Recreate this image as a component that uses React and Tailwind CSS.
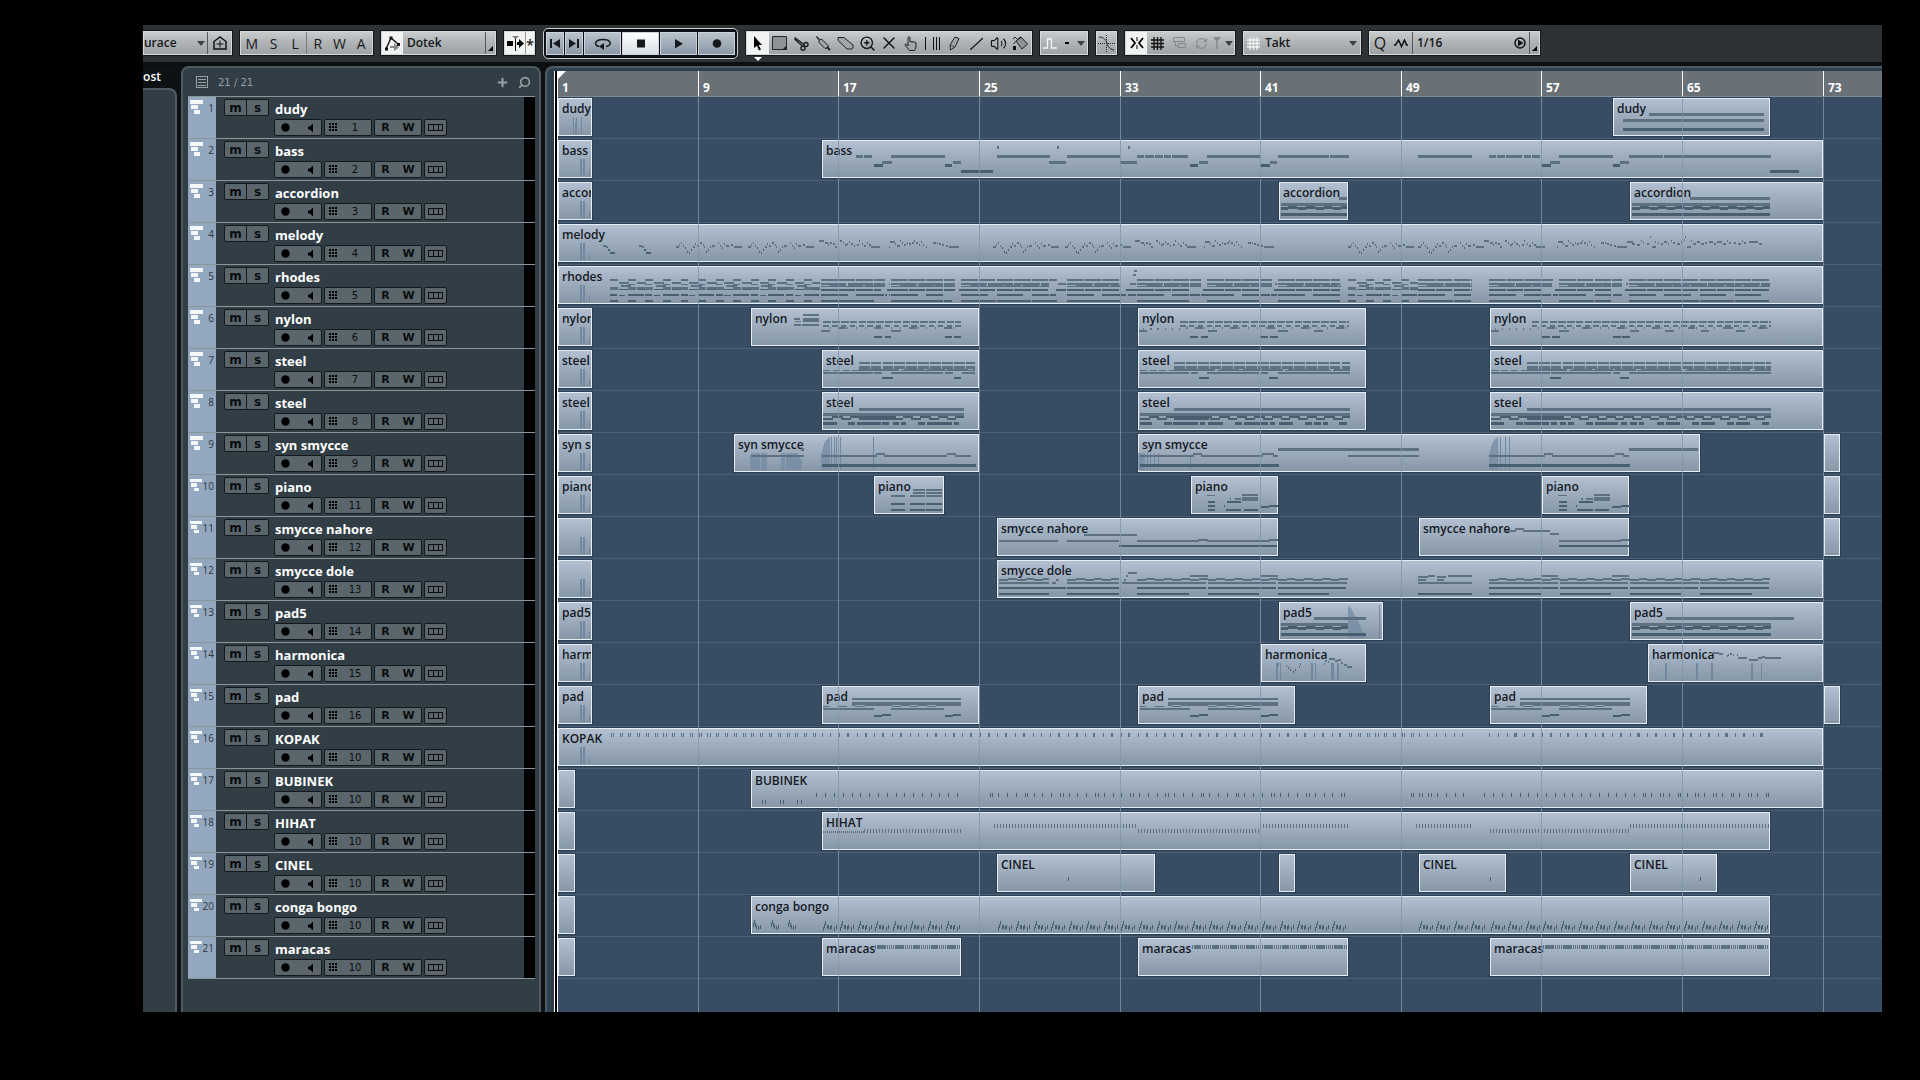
import { Plus, RefreshCw, Search, Volume2, X, ZoomIn } from "lucide-react";

// width of one bar in the arrangement
const BAR = 17.58;
const toX = (bar) => Math.round((bar - 1) * BAR);

const every = (from, to, step, len) => {
  const out = [];
  for (let b = from; b < to - 0.01; b += step) {
    out.push([b, Math.min(b + len, to)]);
  }
  return out;
};

const bars = (text, shift = 0) =>
  text.split(" ").map((part) => part.split("-").map((n) => Number(n) + shift));

// row of notes: y, height, list of [from, to] in bars
const row = (y, h, ...lists) => ({ y, h, list: lists.flat() });

// single hits, one pixel wide
const ticks = (from, to, step) => every(from, to, step, 0.02);

const start = [1, 3];

const chordBlock = (from, to) => [
  row(22, 3, [[from, to]]),
  row(25, 1, every(from + 0.45, to, 1, 0.5)),
  row(26, 2, [[from, to]]),
  row(28, 1, every(from, to, 1, 0.45)),
  row(32, 3, [[from, to]]),
];

const nylonRows = (from, solid, to) => [
  row(14, 2, every(solid, to, 0.5, 0.43)),
  row(18, 2, every(solid, to, 0.5, 0.3)),
  row(20, 2, every(solid + 0.35, to, 0.5, 0.06), every(solid + 0.9, to, 2, 0.4)),
  row(21, 2, every(from + 0.3, solid, 0.4, 0.06)),
];

const steelRows = (from, solid, to) => [
  row(13, 2, every(solid, to, 0.68, 0.62)),
  row(17, 3, every(solid, to, 0.68, 0.62)),
  row(20, 2, every(solid, to, 1.3, 1), every(solid + 0.6, to, 2.2, 0.9)),
  row(21, 1, every(from, to, 0.55, 0.4)),
];

const steelLow = (from, solid, to) => [
  row(17, 3, [[solid, to]]),
  row(22, 3, [[from, to]]),
  row(25, 2, every(from + 0.5, to, 1, 0.6), every(solid, solid + 2, 2, 2)),
  row(27, 2, every(from, to, 1, 0.55), every(solid, solid + 2, 2, 2)),
];

const padRows = (shift) => [
  row(13, 2, bars("17.7-23.95", shift)),
  row(17, 3, bars("17.7-23.95", shift)),
  row(20, 1, bars("17.7-17.9 18.45-20 20.5-21 21.5-22 22.5-23.95", shift)),
  row(21, 1, bars("16.1-16.45 16.9-17.45 17.9-18.45 20-20.5 21-21.5 22-22.5", shift)),
  row(23, 2, bars("16.1-18.95 19.96-22.95", shift)),
  row(29, 2, bars("19.45-19.96 23.45-23.95", shift)),
  row(30, 2, bars("18.95-19.45 23-23.45", shift)),
];

const pianoRows = (shift) => [
  row(20, 1, bars("37.9-38.4", shift)),
  row(19, 2, bars("39.93-40.83", shift)),
  row(22, 4, bars("39.93-40.83", shift)),
  row(23, 2, bars("39.2-39.3 39.5-39.85", shift)),
  row(26, 2, bars("37.95-38.4 39.07-39.85", shift)),
  row(30, 2, bars("37.95-38.4 38.9-38.95 41.46-41.95", shift)),
  row(31, 2, bars("40.95-41.46", shift)),
  row(34, 2, bars("37.95-38.4 38.97-39.87 40-40.8", shift)),
];

const doleRows = (from, to) => [
  row(19, 2, every(from + 0.5, to, 1, 0.5)),
  row(20, 2, every(from, to, 1, 0.5)),
  row(23, 2, every(from, to, 4, 3.92)),
  row(28, 2, every(from, to, 4, 3.9)),
  row(34, 2, every(from, to, 4, 2.92)),
];

const rhodesDense = (from, to) => [
  row(14, 2, every(from, to, 1, 0.93)),
  row(18, 2, every(from, to, 1.5, 1.44)),
  row(20, 2, every(from + 0.5, to, 1, 0.9)),
  row(21, 1, every(from, to, 1, 0.5)),
  row(24, 2, every(from, to, 1, 0.93)),
  row(29, 2, every(from, to, 2, 1.5)),
  row(35, 2, every(from, to, 2, 1.96)),
];

const rhodesLoose = (from, to) => [
  row(14, 2, every(from, to, 1, 0.45)),
  row(17, 2, every(from + 0.5, to, 1, 0.55)),
  row(19, 1, every(from + 1, to, 1, 0.4)),
  row(20, 2, every(from + 0.6, to, 2, 0.6)),
  row(22, 3, every(from, to, 1, 0.45), every(from + 1.5, to, 2, 0.5)),
  row(24, 1, every(from + 0.5, to, 1, 0.5)),
  row(29, 2, every(from, to, 1, 0.4), every(from + 1.4, to, 2, 0.5)),
  row(30, 1, every(from + 0.5, to, 1, 0.35)),
  row(35, 2, every(from, to, 1, 0.45)),
];

// melody phrases: x, y, width in px
const phraseA =
  "0,23,3 3,21,1 5,19,1 7,22,1 9,24,1 11,28,1 13,29,1 15,26,1 17,23,2 19,20,1 21,22,2 24,19,2 27,21,1 28,23,1 30,28,1 32,26,1 34,23,1 36,22,3 42,19,1 44,22,1 46,24,1 48,20,1 50,22,3 55,21,2 58,23,8";
const phraseB =
  "0,17,5 6,19,3 9,21,1 11,19,2 14,20,2 16,23,2 21,17,2 24,19,1 26,21,2 28,20,1 30,18,1 32,20,2 35,22,1 38,21,2 40,17,1 43,20,1 45,22,2 48,19,1 50,21,2 52,23,9";
const phraseC =
  "0,23,1 1,18,5 6,20,1 8,22,3 11,17,1 13,19,1 15,21,2 18,19,1 20,20,2 23,19,2 25,17,1 27,19,2 30,21,1 32,18,1 34,21,1 37,23,1 44,19,3 48,19,1 50,20,2 53,21,2 57,22,2 60,23,10";
const phraseD =
  "0,18,6 5,20,3 10,21,3 14,17,1 16,19,1 20,20,2 23,13,1 25,23,4 28,18,1 31,19,1 34,20,2 37,18,3 41,20,1 44,17,1 46,19,2 50,20,3 54,18,1 57,16,1 58,13,1 60,23,4 64,17,1 66,20,3 70,18,3 74,20,3 78,19,2 82,18,4 87,20,2 90,18,5 96,20,3 100,17,1 102,19,2 107,19,2 111,20,3 115,17,1 117,19,2 122,18,9 132,20,3";
const phraseIntro = "0,22,3 3,23,2 5,26,2 7,29,5";

const phrase = (bar, text) =>
  text.split(" ").map((n) => {
    const [x, y, w] = n.split(",").map(Number);
    return { x: toX(bar) + x, y, w };
  });

const congaHit = "0,32,1 1,29,1 2,26,1 4,30,1 5,30,1 7,31,1 8,30,1 11,32,1 13,30,1";
const conga = (from, to) =>
  every(from, to, 1, 1).flatMap(([b]) => phrase(b, congaHit).map((n) => ({ ...n, h: 4 })));

const tracks = [
  {
    name: "dudy",
    channel: 1,
    clips: [start, [61, 70]],
    rows: [
      row(16, 3, bars("63.07-69.6")),
      row(22, 3, bars("61.6-69.6")),
      row(31, 3, bars("61.6-69.6")),
    ],
    control: "M15 20V37M23 20V37M17 26V37M18 20V37",
  },
  {
    name: "bass",
    channel: 2,
    clips: [start, [16, 73]],
    rows: [
      row(7, 3, bars("25.97-26.06 29.4-29.5 33.45-33.55")),
      row(
        16,
        3,
        bars(
          "17.97-18.35 18.43-18.87 19.97-23.02 25.96-29 29.97-32.98 33.95-34.35 34.41-34.88 34.97-35.4 35.45-35.88 35.94-36.85 37.93-40.98 41.97-44.87 44.93-46 49.94-53 53.97-54.37 54.43-54.88 54.94-55.85 55.97-56.36 56.42-56.88 57.96-61.03 61.94-63.87 63.93-70"
        )
      ),
      row(
        22,
        3,
        bars("19.45-20 23.45-23.9 28.95-29.9 32.95-33.95 37.48-38 41.48-41.9 57.45-58 61.43-61.9")
      ),
      row(25, 3, bars("18.95-19.5 23-23.4 36.97-37.4 40.95-41.5 56.93-57.5 61-61.4")),
      row(31, 3, bars("23.95-25.77 69.96-71.6")),
    ],
  },
  {
    name: "accordion",
    channel: 3,
    clips: [start, [42, 46], [62, 73]],
    rows: [
      row(16, 3, bars("45.44-45.9 65.4-69.95")),
      ...chordBlock(42.1, 45.9),
      ...chordBlock(62.1, 69.95),
    ],
  },
  {
    name: "melody",
    channel: 4,
    clips: [[1, 73]],
    notes: [
      ...phrase(3.58, phraseIntro),
      ...phrase(5.58, phraseIntro),
      ...[7.74, 11.78, 25.73, 29.86, 45.95, 49.94].flatMap((b) => phrase(b, phraseA)),
      ...[15.87, 33.84, 53.65].flatMap((b) => phrase(b, phraseB)),
      ...[19.8, 37.74, 57.8].flatMap((b) => phrase(b, phraseC)),
      ...phrase(61.8, phraseD),
    ],
  },
  {
    name: "rhodes",
    channel: 5,
    clips: [[1, 73]],
    rows: [
      ...rhodesLoose(3.97, 15.9),
      ...rhodesDense(15.97, 18.95),
      ...rhodesDense(19.96, 22.9),
      ...rhodesDense(23.95, 28.95),
      ...rhodesDense(29.97, 32.95),
      ...rhodesDense(33.95, 36.9),
      ...rhodesDense(37.93, 40.9),
      ...rhodesDense(41.97, 45.5),
      ...rhodesLoose(45.95, 49.9),
      ...rhodesDense(49.94, 52.95),
      ...rhodesDense(53.97, 56.9),
      ...rhodesDense(57.96, 60.9),
      ...rhodesDense(61.94, 69.95),
      row(5, 2, bars("33.75-33.95")),
      row(9, 2, bars("33.68-33.85")),
      row(14, 2, bars("18.95-19.6 22.97-23.6 28.95-29.4 36.97-37.55 40.95-41.6 56.95-57.6 60.97-61.5")),
      row(18, 4, bars("18.95-19.6 22.97-23.6 36.97-37.55 40.95-41.6 56.95-57.55 60.97-61.5")),
      row(18, 2, bars("19.8-19.9 29.45-29.9 33.55-33.9 41.8-41.9 61.75-61.85")),
      row(
        24,
        2,
        bars("18.95-19.4 19.7-19.95 22.97-23.6 23.8-23.95 29.3-29.9 33.3-33.95 37.7-37.9 41.7-41.95 57.7-57.95 61.7-61.9")
      ),
      row(29, 2, bars("18.95-19.55 19.6-19.7 19.8-19.9 29-29.3 33-33.3 33.4-33.9 36.97-37.5 37.6-37.9 40.95-41.5 41.55-41.9 56.95-57.5 57.6-57.9 61-61.5")),
      row(35, 2, bars("22.97-23.4 28.95-29.4 56.5-56.9")),
    ],
  },
  {
    name: "nylon",
    channel: 6,
    clips: [start, [12, 25], [34, 47], [54, 73]],
    rows: [
      row(7, 2, bars("14.96-15.85")),
      row(11, 2, bars("14.4-14.75")),
      row(11, 4, bars("14.96-15.85")),
      row(14, 1, bars("14.5-14.8")),
      row(17, 2, bars("14.45-14.8 14.9-15.85")),
      ...nylonRows(16, 16.1, 23.95),
      ...nylonRows(34, 36.4, 46),
      ...nylonRows(54, 56.4, 70),
      row(
        23,
        2,
        bars(
          "15.98-16.5 19.96-20.5 34.05-34.5 37.95-38.5 41.97-42.5 44-44.5 54.1-54.5 57.96-58.5 61.95-62.5 63.95-64.5 66-66.5 68-68.5"
        )
      ),
      row(
        29,
        2,
        bars(
          "18.95-19.45 19.6-19.95 23-23.4 23.55-23.95 36.97-37.4 37.55-37.95 40.95-41.4 41.5-41.97 56.93-57.45 57.55-57.97 61-61.45 61.55-61.95"
        )
      ),
    ],
  },
  {
    name: "steel",
    channel: 7,
    clips: [start, [16, 25], [34, 47], [54, 73]],
    rows: [
      ...steelRows(16.1, 18.1, 24.7),
      ...steelRows(34.1, 36.05, 46.05),
      ...steelRows(54.1, 56.1, 70),
      row(
        23,
        2,
        bars(
          "16.1-18.9 19-19.45 19.96-22.9 23-23.45 23.96-24.7 34.1-36.9 37-37.4 37.93-40.9 41-41.4 41.97-46.05 54.1-57.4 57.5-60.9 61-61.4 61.94-70"
        )
      ),
      row(28, 2, bars("19.45-20.05 23.5-23.95 37.48-38.05 41.46-41.97 57.45-58.05 61.4-61.94")),
    ],
  },
  {
    name: "steel",
    channel: 8,
    clips: [start, [16, 25], [34, 47], [54, 73]],
    rows: [
      ...steelLow(16.1, 18.1, 24.1),
      ...steelLow(34.1, 36.05, 46.05),
      ...steelLow(54.1, 56.1, 70),
      row(
        31,
        3,
        bars(
          "16.1-16.85 17.5-17.9 18-19.35 19.45-19.85 20.05-20.4 20.5-20.8 21.5-21.9 22-23.4 23.5-23.8 34.1-34.8 35.45-35.9 35.97-37.4 37.5-37.8 38-38.8 39.5-39.9 40-41.4 41.5-41.8 42-42.8 43.5-43.9 44-44.4 44.5-44.8 45.45-45.9 54.1-54.8 55.5-55.9 55.97-57.35 57.5-57.85 58-58.35 58.45-58.8 59.5-59.9 59.97-61.3 61.45-61.8 62-62.4 62.5-62.8 63.5-63.9 64-64.8 65.5-65.9 66-66.8 67.5-67.9 68-68.8 69.5-69.9"
        )
      ),
    ],
  },
  {
    name: "syn smycce",
    channel: 9,
    clips: [start, [11, 25], [34, 66], [73, 74, true]],
    rows: [
      row(15, 3, bars("14.85-15 41.97-50 61.94-65.87")),
      row(20, 2, bars("19.1-19.6 23.1-23.65 37.1-37.65 41.05-41.7 57.1-57.6 61.1-61.65")),
      row(
        22,
        2,
        bars(
          "11.95-15 16-19.15 19.55-23.15 23.6-24.5 34.1-37.15 37.6-41.1 41.65-41.97 45.95-50 53.97-57.15 57.55-61.15 61.6-61.94"
        )
      ),
      row(31, 3, bars("16-24.75 34.1-42 53.97-62")),
    ],
    fans: "M192 37V22L195 20H202V37ZM203 20H209V37H203ZM223 20H227V37H223ZM228 20H239L244 28V37H228ZM263 37V22L267 8L272 4V37ZM580 20H587V37H580ZM931 37V22L935 8L940 4V37Z",
    control:
      "M273 4V37M276 4V37M278 4V37M282 4V37M315 4V37M589 20V37M592 20V37M596 20V37M600 20V37M632 24V37M942 4V37M947 4V37M951 4V37",
  },
  {
    name: "piano",
    channel: 11,
    clips: [start, [19, 23], [37, 42], [57, 62], [73, 74, true]],
    rows: [
      row(14, 2, bars("21.2-21.85 21.95-22.85")),
      row(17, 2, bars("21.2-21.85 21.95-22.85")),
      row(20, 2, bars("19.95-20.75 21-21.85 21.95-22.85")),
      row(28, 2, bars("19.95-20.75 21-21.85 21.95-22.85")),
      row(34, 2, bars("19.95-20.75 21-21.85 21.95-22.85")),
      ...pianoRows(0),
      ...pianoRows(20),
    ],
  },
  {
    name: "smycce nahore",
    channel: 12,
    clips: [[1, 3, true], [26, 42], [50, 62], [73, 74, true]],
    rows: [
      row(11, 2, bars("55.45-55.95")),
      row(13, 2, bars("54.95-55.5 55.9-57.45")),
      row(16, 2, bars("57.45-57.95")),
      row(17, 2, bars("30.9-33.95")),
      row(22, 2, bars("37.4-37.95 41.45-41.95 61.4-61.9")),
      row(23, 2, bars("26.1-29.45 29.97-32.9 33.95-37.45 37.9-41.5 57.95-61.45")),
      row(28, 2, bars("32.93-41.9 57.95-61.9")),
    ],
  },
  {
    name: "smycce dole",
    channel: 13,
    clips: [[1, 3, true], [26, 73]],
    rows: [
      ...doleRows(26.1, 28.95),
      ...doleRows(29.97, 32.9),
      ...doleRows(33.95, 45.95),
      ...doleRows(53.97, 69.95),
      row(13, 2, bars("33.4-33.95")),
      row(16, 2, bars("33.3-33.4 36.97-37.95 40.95-41.95 50.5-50.9 51.6-53 56.93-57.9 60.95-61.9")),
      row(17, 2, bars("49.94-50.5 51-51.5")),
      row(20, 2, bars("33.2-33.3 49.94-50.4 51-51.4")),
      row(23, 2, bars("29.1-29.3 33.1-33.95 49.94-53")),
      row(20, 2, bars("29.3-29.5")),
      row(28, 2, bars("28.95-29.9")),
      row(34, 2, bars("49.94-53")),
    ],
  },
  {
    name: "pad5",
    channel: 14,
    clips: [start, [42, 48], [62, 73]],
    rows: [
      row(16, 3, bars("44-46.95 64-71.3")),
      ...chordBlock(42.1, 45.95),
      ...chordBlock(62.1, 70),
      row(32, 3, bars("45.9-46.95")),
    ],
    fans: "M790 37V4L794 9L800 20L806 33L809 37Z",
    control: "M821 4V37",
  },
  {
    name: "harmonica",
    channel: 15,
    clips: [start, [41, 47], [63, 73]],
    notes: [
      ...phrase(41.9, "0,22,1 1,20,1 9,22,1 11,24,1 13,26,1 16,28,1 18,26,1 22,23,1 23,20,1"),
      ...phrase(44.6, "0,20,1 1,17,2 4,18,1 5,15,6 11,17,3 14,16,3 17,19,2 20,21,3 23,23,5"),
      ...phrase(66.6, "0,9,8 8,10,4 16,12,1 17,11,1 19,10,2 22,11,1 26,11,1 27,14,9 38,16,9 47,14,4 51,13,3 54,14,16"),
    ],
    control:
      "M718 20V37M719 20V37M722 20V37M753 20V37M754 20V37M757 20V37M773 20V37M774 20V37M775 20V37M779 20V37M780 20V37M1107 20V37M1108 20V37M1138 20V37M1139 20V37M1153 20V37M1154 20V37M1193 20V37M1194 20V37M1203 20V37",
  },
  {
    name: "pad",
    channel: 16,
    clips: [start, [16, 25], [34, 43], [54, 63], [73, 74, true]],
    rows: [...padRows(0), ...padRows(18), ...padRows(38)],
  },
  {
    name: "KOPAK",
    channel: 10,
    clips: [[1, 73]],
    rows: [
      row(
        6,
        4,
        ticks(4, 15.7, 0.5),
        ticks(4.12, 15.7, 0.5),
        ticks(16, 45.9, 0.5),
        every(17.45, 45.9, 1, 0.1),
        ticks(46, 49.9, 0.5),
        ticks(46.12, 49.9, 0.5),
        ticks(49.95, 52.9, 0.5),
        ticks(53.97, 69.6, 0.5),
        every(55.4, 69.6, 1, 0.1)
      ),
    ],
  },
  {
    name: "BUBINEK",
    channel: 10,
    clips: [[1, 2, true], [12, 73]],
    rows: [
      row(24, 4, ticks(15.7, 23.9, 0.5), ticks(25.55, 45.9, 0.5), ticks(25.7, 45.9, 2)),
      row(24, 4, ticks(49.5, 52.9, 0.5), ticks(49.65, 51, 0.5), ticks(53.7, 69.9, 0.5)),
      row(24, 4, ticks(62.85, 69.9, 1)),
      row(31, 4, ticks(12.6, 15, 1), ticks(12.8, 15, 1)),
    ],
  },
  {
    name: "HIHAT",
    channel: 10,
    clips: [[1, 2, true], [16, 70]],
    rows: [
      row(13, 4, ticks(25.8, 33.95, 0.1707), ticks(40.95, 45.95, 0.1707)),
      row(13, 4, ticks(49.8, 53, 0.1707), ticks(61.95, 69.95, 0.1707)),
      row(18, 4, ticks(18.4, 23.95, 0.1707), ticks(34, 40.9, 0.1707)),
      row(18, 4, ticks(54, 61.9, 0.1707)),
      row(20, 2, ticks(16.1, 18.4, 0.1138)),
    ],
  },
  {
    name: "CINEL",
    channel: 10,
    clips: [[1, 2, true], [26, 35], [42, 43, true], [50, 55], [62, 67]],
    rows: [row(24, 4, bars("30-30.06 54-54.06 65.95-66.01"))],
  },
  {
    name: "conga bongo",
    channel: 10,
    clips: [[1, 2, true], [12, 70]],
    notes: [
      ...[12.1, 13.1, 14.1]
        .flatMap((b) => phrase(b, "0,28,1 1,25,1 2,28,1 3,30,1 5,31,1 7,30,1"))
        .map((n) => ({ ...n, h: 4 })),
      ...conga(16.05, 24),
      ...conga(26.05, 46),
      ...conga(49.95, 53),
      ...conga(54.05, 70),
    ],
  },
  {
    name: "maracas",
    channel: 10,
    clips: [[1, 2, true], [16, 24], [34, 46], [54, 70]],
    rows: [
      row(8, 4, ticks(19.05, 23.9, 0.1138), every(19.2, 23.9, 1, 0.4)),
      row(8, 4, ticks(37.05, 45.9, 0.1138), every(37.2, 45.9, 1, 0.4)),
      row(8, 4, ticks(57.05, 69.9, 0.1138), every(57.2, 69.9, 1, 0.4)),
    ],
  },
];

const startControl = "M22 20V37M23 20V37M25 20V37M26 20V37M31 31V37";

const toPath = (list) => list.map((n) => `M${n.x} ${n.y}h${n.w}v${n.h}h-${n.w}z`).join("");

const getNotes = (track) => {
  const fromRows = (track.rows || []).flatMap((r) =>
    r.list.map(([a, b]) => ({ x: toX(a), y: r.y, w: Math.max(1, toX(b) - toX(a)), h: r.h }))
  );
  const single = (track.notes || []).map((n) => ({ h: 2, ...n }));
  return [...fromRows, ...single];
};

const Lane = ({ track }) => {
  const notes = getNotes(track);
  const hasStart = track.clips[0][1] !== 2 && track.name !== "dudy";
  return (
    <div className="relative h-[42px] overflow-hidden border-b border-[#4b6076]">
      {track.clips.map(([from, to, blank]) => (
        <div
          key={from}
          className="absolute top-px h-[38px] overflow-hidden border border-[#e6edf3] bg-linear-to-b from-[#b2c0d1] to-[#8697a7] px-[3px] pt-[2px] text-[12px] leading-4 font-semibold whitespace-nowrap text-[#15191f] outline outline-[#2b4055]"
          style={{ left: toX(from), width: toX(to) - toX(from) - 1 }}
        >
          {blank ? "" : track.name}
        </div>
      ))}
      <svg className="absolute inset-0 h-full w-full" shapeRendering="crispEdges">
        {track.fans && <path d={track.fans} fill="#7489a1" opacity="0.75" />}
        <path
          d={(hasStart ? startControl : "") + (track.control || "")}
          transform="translate(0.5 0)"
          stroke="#7387a0"
          fill="none"
        />
        <path d={toPath(notes.filter((n) => n.y < 24))} fill="#5d7182" />
        <path d={toPath(notes.filter((n) => n.y >= 24))} fill="#495e6f" />
      </svg>
    </div>
  );
};

const box = "flex h-[17px] items-center rounded-[2px] border border-[#12181c] bg-[#5b666c] text-[#0a0d0f]";

const TrackRow = ({ track, index }) => (
  <li className="flex h-[42px] border-t border-[#8b959c]">
    <div className="flex w-7 items-start justify-between bg-[#93a8be] pt-[3px] pr-[2px] pl-[2px]">
      <svg width="14" height="14" viewBox="0 0 14 14" fill="#f4f8fb" shapeRendering="crispEdges">
        <path d="M0 0h13v4H0zM1 5h7v4H1zM4 10h6v4H4z" />
      </svg>
      <span className="pt-px text-[10px] leading-[14px] text-[#2c3640]">{index + 1}</span>
    </div>
    <div className="flex flex-1 gap-[5px] pt-[2px] pl-2">
      <div className={`${box} w-[45px] font-["DejaVu_Sans"] text-[12px] leading-none font-bold`}>
        <button className="h-full flex-1 border-r border-[#12181c]">m</button>
        <button className="h-full flex-1">s</button>
      </div>
      <div className="flex flex-col gap-[2px]">
        <span className="h-[18px] pl-px text-[13px] leading-5 font-bold text-white">{track.name}</span>
        <div className="flex gap-[2px]">
          <div className={`${box} w-12 justify-between px-[6px]`}>
            <button aria-label="Record">
              <svg width="9" height="9" viewBox="0 0 9 9">
                <circle cx="4.5" cy="4.5" r="4.2" />
              </svg>
            </button>
            <button aria-label="Monitor">
              <svg width="8" height="10" viewBox="0 0 8 10">
                <path d="M1 3.500h2L6 0.500v9L3 6.500H1z" />
              </svg>
            </button>
          </div>
          <button className={`${box} w-12 gap-[9px] px-1 text-[10px] leading-none`}>
            <svg width="9" height="9" viewBox="0 0 9 9" shapeRendering="crispEdges">
              <path d="M0 0h2v2H0zM3 0h2v2H3zM6 0h2v2H6zM0 3h2v2H0zM3 3h2v2H3zM6 3h2v2H6zM0 6h2v2H0zM3 6h2v2H3zM6 6h2v2H6z" />
            </svg>
            <span className='w-4 text-center font-["DejaVu_Sans"]'>{track.channel}</span>
          </button>
          <div className={`${box} w-12 justify-around font-["DejaVu_Sans"] text-[11px] leading-none font-bold`}>
            <button>R</button>
            <button>W</button>
          </div>
          <button className={`${box} w-[23px] justify-center`} aria-label="Lanes">
            <svg width="15" height="7" viewBox="0 0 15 7" fill="none" stroke="currentColor" shapeRendering="crispEdges">
              <path d="M0.500 0.500h14v6h-14zM5.500 0v7M10 0v7" />
            </svg>
          </button>
        </div>
      </div>
    </div>
    <div className="w-[11px] bg-black" />
  </li>
);

const group =
  "flex h-6 shrink-0 items-stretch border border-[#d5d9db] bg-linear-to-b from-[#c9cccd] via-[#aeb2b4] to-[#9ea3a5] text-[#16191b] outline outline-[#15181a]";
const tool = "flex flex-1 items-center justify-center";
const lit = "bg-[#f1f2f2]";

const Caret = () => (
  <svg width="8" height="5" viewBox="0 0 8 5" fill="#3b4043" className="shrink-0 self-center">
    <path d="M0 0h8L4 5z" />
  </svg>
);

const Corner = () => (
  <span className="flex w-[10px] items-end justify-end border-l border-[#55595b] pr-[2px] pb-[3px]">
    <svg width="5" height="5" viewBox="0 0 5 5">
      <path d="M5 0v5H0z" />
    </svg>
  </span>
);

const Grid = ({ color }) => (
  <svg width="13" height="13" viewBox="0 0 13 13" stroke={color} strokeWidth="1.300" className="shrink-0 self-center">
    <path d="M3 0v13M6.500 0v13M10 0v13M0 3h13M0 6.500h13M0 10h13" />
  </svg>
);

const tools = [
  {
    name: "Select",
    icon: (
      <svg width="10" height="15" viewBox="0 0 10 15" fill="#000">
        <path d="M1 0l8 9H5.500L8 13.500 6 14.500 4 9.800 1 12z" />
      </svg>
    ),
  },
  {
    name: "Range",
    icon: (
      <svg width="16" height="14" viewBox="0 0 16 14" fill="#8d9294" stroke="#25292b">
        <path d="M0.500 0.500h14v13h-14z" />
        <path d="M14.500 10v3.500H11z" fill="#111" />
      </svg>
    ),
  },
  {
    name: "Split",
    icon: (
      <svg width="15" height="15" viewBox="0 0 15 15" fill="none" stroke="#1c2022" strokeWidth="1.400">
        <path d="M0.500 1.500L10 8.500M0.500 3L8.500 10" />
        <circle cx="12" cy="8.500" r="2" />
        <circle cx="9" cy="12.200" r="2" />
      </svg>
    ),
  },
  {
    name: "Glue",
    icon: (
      <svg width="15" height="15" viewBox="0 0 15 15" fill="#a1a5a7" stroke="#1c2022">
        <path d="M0.500 0.500L3.500 4" strokeWidth="1.300" />
        <path d="M3 4.500L5.500 3l7 7-1.500 2-2 .5-6-6z" />
        <path d="M11 11l3 3" strokeWidth="2" />
      </svg>
    ),
  },
  {
    name: "Erase",
    icon: (
      <svg width="17" height="14" viewBox="0 0 17 14" fill="#a1a5a7" stroke="#222">
        <path d="M1 1.500h6l9 7.500v3l-1.500 1H10L1 4.500z" />
      </svg>
    ),
  },
  { name: "Zoom", icon: <ZoomIn size={17} strokeWidth={2} /> },
  { name: "Mute", icon: <X size={20} strokeWidth={1.8} /> },
  {
    name: "Hand",
    icon: (
      <svg width="13" height="15" viewBox="0 0 13 15" fill="#a1a5a7" stroke="#222">
        <path d="M4 8V1.500q1-1.500 2 0V6q1-1 2 0 1-1 2 .3 1-.8 2 .4V11l-1.500 3.500h-5L1 9q0-1.500 1.500-.8L4 10z" />
      </svg>
    ),
  },
  {
    name: "Time warp",
    icon: (
      <svg width="16" height="13" viewBox="0 0 16 13" stroke="#111" shapeRendering="crispEdges">
        <path d="M0.500 0v13M8.500 0v13M11.500 0v13M14.500 0v13" />
      </svg>
    ),
  },
  {
    name: "Draw",
    icon: (
      <svg width="11" height="15" viewBox="0 0 11 15" fill="#a1a5a7" stroke="#222">
        <path d="M6 1l4 1.500L6 11l-4.500 3L1 9z" />
        <path d="M1.500 9l4 2" strokeWidth=".7" />
      </svg>
    ),
  },
  {
    name: "Line",
    icon: (
      <svg width="13" height="13" viewBox="0 0 13 13" stroke="#222" strokeWidth="1.300">
        <path d="M0 13L13 1" />
      </svg>
    ),
  },
  { name: "Play", icon: <Volume2 size={17} strokeWidth={1.6} /> },
  {
    name: "Color",
    icon: (
      <svg width="16" height="15" viewBox="0 0 16 15" fill="#8d9294" stroke="#222">
        <path d="M4 5l5-4 6.500 7-5.500 5z" />
        <path d="M9 1L6.500 3" strokeWidth="1.500" />
        <path d="M1 3l2-2 3 3M4 5L1.500 8" fill="none" />
        <path d="M1 10h3v4H1z" fill="#111" stroke="none" />
      </svg>
    ),
  },
];

const transport = [
  ["Previous", "w-[18px]", <path key="p" d="M1 1h2v9H1zM11 1v9L4 5.500z" />],
  ["Next", "w-[18px]", <path key="p" d="M9 1h2v9H9zM1 1v9l7-4.500z" />],
  [
    "Cycle",
    "w-[37px]",
    <path
      key="p"
      d="M2 8.500C-4 7-2 1.500 6 1.500S16 7 9 8.500"
      fill="none"
      stroke="currentColor"
      strokeWidth="1.500"
    />,
  ],
  ["Stop", "w-[37px]", <path key="p" d="M2 1.500h8v8H2z" />],
  ["Start", "w-[37px]", <path key="p" d="M2 1v9.500L10 5.800z" />],
  ["Record", "w-[37px]", <circle key="p" cx="6" cy="5.500" r="4.300" />],
];

const Toolbar = () => (
  <header className="flex h-[37px] items-center gap-2 bg-[#2d3235] pb-px text-[12px] font-semibold">
    <div className={`${group} w-[89px]`}>
      <button className="flex flex-1 items-center justify-between pr-[2px]">
        urace <Caret />
      </button>
      <button className="flex w-6 items-center justify-center border-l border-[#55595b]" aria-label="Workspaces">
        <svg width="14" height="14" viewBox="0 0 14 14" fill="none" stroke="#111" strokeWidth="1.500">
          <path d="M1 5.500L7 1l6 4.500V13H1z" />
          <path d="M7 4.500v7M3.500 8h7" strokeWidth="1" />
        </svg>
      </button>
    </div>
    <div className={`${group} w-[133px] text-[14px] font-normal`}>
      {["M", "S", "L", "R", "W", "A"].map((l) => (
        <button key={l} className={`${tool} ${l === "R" ? "border-l border-[#777c7f]" : ""}`}>
          {l}
        </button>
      ))}
    </div>
    <div className={`${group} w-[115px]`}>
      <button className={`flex w-[21px] items-center justify-center ${lit}`} aria-label="Automation">
        <svg width="15" height="15" viewBox="0 0 15 15" fill="none" stroke="#111">
          <path d="M1 13L6 2l7 6" strokeWidth="1.400" />
          <path d="M0 11.500h3v3H0zM4.500 0.500h3v3h-3zM12 7h3v3h-3z" fill="#111" stroke="none" />
          <path d="M5 10h4V7l5 4.500L9 15v-3H5z" fill="#888" stroke="none" />
        </svg>
      </button>
      <select aria-label="Automation mode" className="flex-1 appearance-none pl-1 outline-none">
        <option>Dotek</option>
      </select>
      <Corner />
    </div>
    <div className={`${group} w-[31px]`}>
      <button className={`flex w-[21px] items-center justify-center ${lit}`} aria-label="Auto-scroll">
        <svg width="17" height="15" viewBox="0 0 17 15">
          <path d="M0 5h6v5H0zM8 2h1v13H8zM10 6h2V3l5 4.500-5 4.500V9h-2z" />
          <path d="M5 0h7L8.500 3z" fill="#777" />
        </svg>
      </button>
      <button className={`flex-1 border-l border-[#999] pt-1 text-[14px] leading-none ${lit}`}>*</button>
    </div>
    <div className="flex h-[31px] w-[195px] shrink-0 items-center gap-px rounded-[5px] border border-[#c9ced1] bg-[#0c1016] px-[2px]">
      {transport.map(([name, width, icon]) => (
        <button
          key={name}
          aria-label={name}
          className={`${width} flex h-[23px] items-center justify-center border border-[#ccd3da] ${
            name === "Stop" ? "bg-linear-to-b from-white to-[#d7dee6]" : "bg-linear-to-b from-[#b9c3cd] to-[#8b98a5]"
          } text-[#15191e]`}
        >
          <svg width="12" height="11" viewBox="0 0 12 11" fill="currentColor" className="shrink-0 overflow-visible">
            {icon}
            {name === "Cycle" && <path d="M2 8.500l5-3.500v7z" />}
          </svg>
        </button>
      ))}
    </div>
    <div className={`${group} w-[286px]`}>
      {tools.map((t, i) => (
        <button key={t.name} aria-label={t.name} className={`${tool} ${i === 0 ? `relative ${lit}` : ""}`}>
          {t.icon}
          {i === 0 && (
            <svg className="absolute top-[25px]" width="8" height="4" viewBox="0 0 8 4" fill="#fff">
              <path d="M0 0h8L4 4z" />
            </svg>
          )}
        </button>
      ))}
    </div>
    <button className={`${group} w-12 px-[2px]`} aria-label="Automation shape">
      <span className="flex flex-1 items-center justify-between">
        <svg width="14" height="11" viewBox="0 0 14 11" fill="none" stroke="#f4f5f5" strokeWidth="1.300">
          <path d="M0 10h4.500V1h4v9H14" />
        </svg>
        <span className="h-[2px] w-1 bg-black" />
        <Caret />
      </span>
    </button>
    <button className={`${group} w-[21px] justify-center pt-[3px]`} aria-label="Crossfade">
      <svg width="17" height="17" viewBox="0 0 17 17" fill="none" stroke="#24282a">
        <path d="M1 2c5 0 7 3 8 6s2 6 7 7" />
        <path d="M8.500 0v17M0 8.500h17" strokeDasharray="1 1" />
      </svg>
    </button>
    <div className={`${group} w-[110px]`}>
      <button className={`flex w-[21px] items-center justify-center ${lit}`} aria-label="Snap">
        <svg width="14" height="12" viewBox="0 0 14 12" fill="none" stroke="#000" strokeWidth="1.800">
          <path d="M1 1l4 5-4 5M13 1L9 6l4 5" />
          <path d="M7 0v4M7 8v4" strokeWidth="1" />
        </svg>
      </button>
      <button className={tool} aria-label="Grid">
        <Grid color="#111" />
      </button>
      <button className={`${tool} text-[#84898b]`} aria-label="Grid relative">
        <svg width="13" height="12" viewBox="0 0 13 12" fill="none" stroke="currentColor">
          <path d="M0.500 0.500h11v4h-11zM5.500 6.500h7v4h-7zM2.500 5v4h3" />
        </svg>
      </button>
      <button className={`${tool} text-[#84898b]`} aria-label="Events">
        <RefreshCw size={13} strokeWidth={2} />
      </button>
      <button className={`${tool} gap-1 text-[#84898b]`} aria-label="Snap type">
        <svg width="8" height="12" viewBox="0 0 8 12" fill="currentColor">
          <path d="M0 0h8L4.700 4v8H3.300V4z" />
        </svg>
        <Caret />
      </button>
    </div>
    <div className={`${group} w-[118px] px-[3px]`}>
      <Grid color="#f1f3f3" />
      <select aria-label="Grid type" className="flex-1 appearance-none pl-[5px] outline-none">
        <option>Takt</option>
      </select>
      <Caret />
    </div>
    <div className={`${group} w-[171px]`}>
      <button className="w-5 text-[16px] leading-none font-normal">Q</button>
      <button className="flex w-[23px] items-center justify-center border-r border-[#55595b]" aria-label="Iterative quantize">
        <svg width="14" height="9" viewBox="0 0 14 9" fill="none" stroke="#111" strokeWidth="1.500">
          <path d="M0 6h1.500L4.500 1l3 6.500L10.500 1l2 5H14" />
        </svg>
      </button>
      <select aria-label="Quantize" className="flex-1 appearance-none pl-1 outline-none">
        <option>1/16</option>
      </select>
      <button className="px-[3px]" aria-label="Apply quantize">
        <svg width="12" height="12" viewBox="0 0 12 12" fill="none" stroke="#111" strokeWidth="1.500">
          <circle cx="6" cy="6" r="5" />
          <path d="M4 2.500v7L9.500 6z" fill="#111" stroke="none" />
        </svg>
      </button>
      <Corner />
    </div>
  </header>
);

const TrackList = () => (
  <section className="w-[360px] shrink-0 rounded-t-lg border-2 border-b-0 border-[#4e5b62] bg-[#323e46] pr-1 pl-[5px]">
    <div className="flex h-7 items-center justify-between pr-1 pl-2 text-[#97a0a5]">
      <div className="flex items-center gap-[10px]">
        <svg width="12" height="12" viewBox="0 0 12 12" fill="none" stroke="currentColor" shapeRendering="crispEdges">
          <path d="M0.500 0.500h11v11h-11zM2 3.500h8M2 6.500h8M2 9.500h8" />
        </svg>
        <span className='font-["DejaVu_Sans"] text-[10px]'>21 / 21</span>
      </div>
      <div className="flex items-center gap-[9px]">
        <button aria-label="Add track">
          <Plus size={13} strokeWidth={4} />
        </button>
        <button aria-label="Find track">
          <Search size={13} strokeWidth={3} className="-scale-x-100" />
        </button>
      </div>
    </div>
    <ul className="border-b border-[#8b959c]">
      {tracks.map((track, i) => (
        <TrackRow key={i} track={track} index={i} />
      ))}
    </ul>
  </section>
);

const marks = [1, 9, 17, 25, 33, 41, 49, 57, 65, 73];

const Timeline = () => (
  <section className="flex min-w-0 flex-1 flex-col overflow-hidden rounded-tl-lg border-t-2 border-l-2 border-[#4e5b62] bg-[#2f414e] pt-[3px] pl-1">
    <div className="flex flex-1">
      <div className="flex w-[7px] shrink-0 justify-end bg-[#2c3b45]">
        <div className="w-1 border-x border-white bg-black" />
      </div>
      <div className="relative flex min-w-0 flex-1 flex-col overflow-hidden bg-[#384d63]">
        <div className="relative h-[26px] shrink-0 overflow-hidden border-b border-[#7f8a92] bg-[#697177]">
          {marks.map((m) => (
            <span
              key={m}
              className="absolute bottom-0 h-full border-l border-white pt-[8px] pl-1 text-[12px] leading-[18px] font-bold text-white"
              style={{ left: toX(m) - 1 }}
            >
              {m}
            </span>
          ))}
          <svg className="absolute top-0 left-0" width="8" height="8" viewBox="0 0 8 8" fill="#fff">
            <path d="M0 0h8L0 8z" />
          </svg>
        </div>
        {tracks.map((track, i) => (
          <Lane key={i} track={track} />
        ))}
        {marks.slice(1).map((m) => (
          <div
            key={m}
            className="pointer-events-none absolute top-[26px] bottom-0 w-px bg-[#8296a9]/80"
            style={{ left: toX(m) - 1 }}
          />
        ))}
      </div>
    </div>
  </section>
);

export default function App() {
  return (
    <div className='flex min-h-screen flex-col bg-black pt-[25px] pr-[38px] pb-[68px] pl-[143px] font-["Open_Sans","Noto_Sans",sans-serif]'>
      <Toolbar />
      <main className="flex flex-1 gap-1 border-t-4 border-[#0b0f11] bg-[#0e1214]">
        <aside className="flex w-[34px] shrink-0 flex-col">
          <div className="flex h-[22px] w-[18px] items-center justify-end overflow-hidden text-[12px] font-semibold text-white">
            nost
          </div>
          <div className="flex-1 rounded-tr-lg border-t-2 border-r-2 border-[#4e5b62] bg-[#323e46]" />
        </aside>
        <TrackList />
        <Timeline />
      </main>
    </div>
  );
}
